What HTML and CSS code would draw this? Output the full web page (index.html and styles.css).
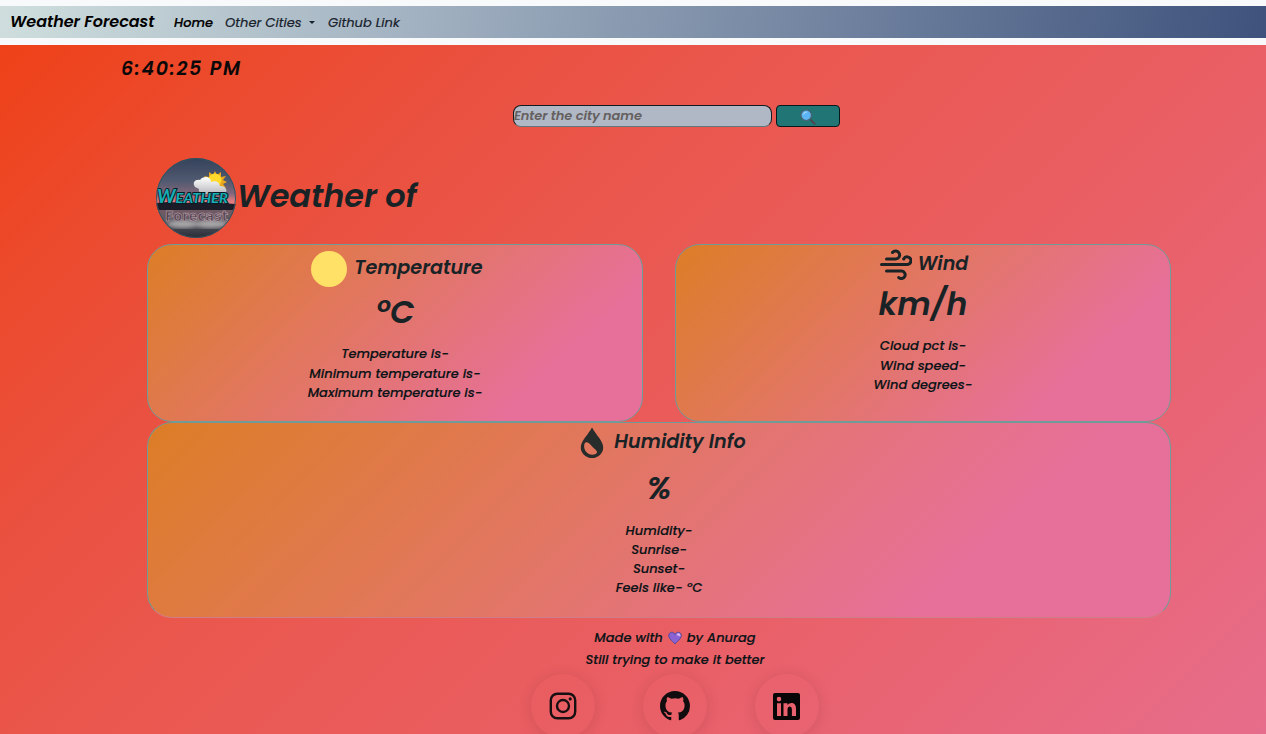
FILE: index.html
```
<!DOCTYPE html>
<html lang="en">
<head>
<meta charset="utf-8">
<title>Weather Forecast</title>
<link rel="stylesheet" href="styles.css">
</head>
<body>
<nav class="navbar">
  <div class="navbar-inner">
    <a class="brand"><span>Weather Forecast</span></a>
    <a class="nav-link active"><span>Home</span></a>
    <a class="nav-link cities"><span>Other Cities</span><i class="caret"></i></a>
    <a class="nav-link"><span>Github Link</span></a>
  </div>
</nav>
<main class="page">
  <div class="clock">6:40:25 PM</div>
  <form class="search">
    <input class="city" type="text" placeholder="Enter the city name">
    <button class="go" type="button" aria-label="Search">
      <svg width="16" height="16" viewBox="0 0 16 16"><path d="M10.5 10.5l4.6 4.8" stroke="#51404a" stroke-width="1.8"/><circle cx="6.2" cy="6.2" r="5.3" fill="#5db4f5" stroke="#49606c" stroke-width="1.2"/><path d="M3.2 5.4Q4.4 3 7 3" stroke="#a7d8fa" stroke-width="1.2" fill="none"/></svg>
    </button>
  </form>
  <header class="heading">
    <svg class="logo" viewBox="0 0 80 80">
      <defs>
        <linearGradient id="sky" x2="0" y2="1"><stop offset="0" stop-color="#34425b"/><stop offset=".5" stop-color="#515a70"/><stop offset=".75" stop-color="#80667a"/><stop offset=".92" stop-color="#e37c80"/></linearGradient>
        <linearGradient id="lake" x2="0" y2="1"><stop offset="0" stop-color="#765964"/><stop offset=".4" stop-color="#5f5a62"/><stop offset="1" stop-color="#262d38"/></linearGradient>
        <linearGradient id="cloudfill" x2="0" y2="1"><stop offset="0" stop-color="#fff"/><stop offset="1" stop-color="#b8b9bd"/></linearGradient>
        <clipPath id="disc"><circle cx="40" cy="40" r="40"/></clipPath>
        <filter id="soft"><feGaussianBlur stdDeviation="2"/></filter>
      </defs>
      <g clip-path="url(#disc)">
        <path fill="url(#sky)" d="M0 0h80v47H0z"/>
        <path fill="url(#lake)" d="M0 50h80v30H0z"/>
        <g filter="url(#soft)" fill="#aaa8aa"><ellipse cx="27" cy="66" rx="16" ry="4"/><ellipse cx="55" cy="66" rx="17" ry="4"/></g>
        <path fill="#1b1c27" d="M0 45l12-1 17 1 18-1 33 2v6H0z"/>
        <path fill="#eba81d" d="M59 13l2 4 4-3v5l5-1-3 4 4 2-4 2 3 4-5-1v5l-4-3-2 4-2-4-4 3v-5l-5 1 3-4-4-2 4-2-3-4 5 1v-5l4 3z"/>
        <circle cx="59" cy="22" r="6.5" fill="#ffda2c"/>
        <path fill="url(#cloudfill)" d="M39 29c-3-4 0-8 5-7 4-5 11-3 11 2 5-2 8 0 9 4 7 0 9 7 3 8H51c-6 0-9-2-8-5z"/>
        <text class="logo-top" x="1" y="45" textLength="71" lengthAdjust="spacingAndGlyphs"><tspan font-size="18">W</tspan>EATHER</text>
        <text class="logo-bottom" x="9" y="63" textLength="63" lengthAdjust="spacingAndGlyphs">Forecast</text>
      </g>
      <circle cx="40" cy="40" r="39.5" fill="none" stroke="#315360"/>
    </svg>
    <h1>Weather of</h1>
  </header>
  <section class="cards">
    <article class="card temp">
      <div class="title"><i class="sun"></i><h2>Temperature</h2></div>
      <h3>ºC</h3>
      <ul><li>Temperature is-</li><li>Minimum temperature is-</li><li>Maximum temperature is-</li></ul>
    </article>
    <article class="card wind">
      <div class="title">
        <svg width="32" height="32" viewBox="0 0 32 32" fill="none" stroke="#192326" stroke-width="3" stroke-linecap="round"><path d="M6.5 10h9a4 4 0 1 0-3-6.5M1.5 15.5H27a3.8 3.8 0 1 0-3.3-5.5M6.5 22h15.2a3.8 3.8 0 1 1-3 6.5"/></svg>
        <h2>Wind</h2>
      </div>
      <h3>km/h</h3>
      <ul><li>Cloud pct is-</li><li>Wind speed-</li><li>Wind degrees-</li></ul>
    </article>
    <article class="card humid">
      <div class="title">
        <svg width="24" height="32" viewBox="0 0 24 32"><path fill="#282c2b" fill-rule="evenodd" d="M12 .5C8 8 .8 14 .8 20.4a11.2 10.6 0 0 0 22.4 0C23.2 14 16 8 12 .5zM4.3 17.2c1.5-3.6 4.6-1.6 7.4 1.7 2.8 3.3 7.5 5.5 4.3 7.8-5.5 3.1-13.2-1.7-11.7-9.5z"/></svg>
        <h2>Humidity Info</h2>
      </div>
      <h3>%</h3>
      <ul><li>Humidity-</li><li>Sunrise-</li><li>Sunset-</li><li>Feels like- ºC</li></ul>
    </article>
  </section>
  <footer class="footer">
    <p class="made"><span>Made with</span><svg width="14" height="14" viewBox="0 0 14 14"><path fill="#8b62d3" stroke="#574a94" d="M7 12.8C3 9.2.6 7 .8 4 1.2.7 5.3.3 7 3.3 8.7.3 12.8.7 13.2 4 13.4 7 11 9.2 7 12.8z"/><path d="M9 3.8q2.5-1.4 2.6 1.4" stroke="#d9b6f5" stroke-width="2" fill="none"/></svg><span>by Anurag</span></p>
    <p class="better"><span>Still trying to make it better</span></p>
    <div class="social">
      <a><svg width="28" height="28" viewBox="0 0 28 28" fill="none" stroke="#170f12" stroke-width="2.4"><rect x="1.8" y="1.8" width="24.4" height="24.4" rx="6.5"/><circle cx="14" cy="14" r="6"/><circle cx="21.2" cy="6.9" r="1.6" fill="#170f12" stroke="none"/></svg></a>
      <a><svg width="30" height="30" viewBox="0 0 16 16" fill="#110d0f"><path d="M8 0C3.58 0 0 3.58 0 8c0 3.54 2.29 6.53 5.47 7.59.4.07.55-.17.55-.38 0-.19-.01-.82-.01-1.49-2.01.37-2.53-.49-2.69-.94-.09-.23-.48-.94-.82-1.13-.28-.15-.68-.52-.01-.53.63-.01 1.08.58 1.23.82.72 1.21 1.87.87 2.33.66.07-.52.28-.87.51-1.07-1.78-.2-3.64-.89-3.64-3.95 0-.87.31-1.59.82-2.15-.08-.2-.36-1.02.08-2.12 0 0 .67-.21 2.2.82a7.6 7.6 0 0 1 4 0c1.53-1.04 2.2-.82 2.2-.82.44 1.1.16 1.92.08 2.12.51.56.82 1.27.82 2.15 0 3.07-1.87 3.75-3.65 3.95.29.25.54.73.54 1.48 0 1.07-.01 1.93-.01 2.2 0 .21.15.46.55.38A8.01 8.01 0 0 0 16 8c0-4.42-3.58-8-8-8z"/></svg></a>
      <a><svg width="27" height="27" viewBox="0 0 27 27"><path fill="#080607" fill-rule="evenodd" d="M2 0h23a2 2 0 0 1 2 2v23a2 2 0 0 1-2 2H2a2 2 0 0 1-2-2V2a2 2 0 0 1 2-2zM4 10.2V23h4V10.2zM6 3.8a2.3 2.3 0 1 0 0 4.6 2.3 2.3 0 0 0 0-4.6zM10.5 10.2V23h4v-6.6c0-3.6 4.4-3.8 4.4 0V23H23v-7.8c0-6-6-6.5-8.5-3.1v-1.9z"/></svg></a>
    </div>
  </footer>
</main>
</body>
</html>
```
FILE: styles.css
```
* { box-sizing: border-box; }
body {
  margin: 0;
  height: 734px;
  overflow: hidden;
  display: flex;
  flex-direction: column;
  font-family: Poppins, Inter, sans-serif;
  font-style: italic;
  font-weight: 500;
  color: #0b1317;
}
h1, h2, h3, ul, p { margin: 0; padding: 0; }
h1, h2, h3 { font-weight: 600; color: #192326; white-space: nowrap; }
ul { list-style: none; }
svg { display: block; flex: none; }

.navbar { height: 45px; padding: 6px 0 7px; background: #f8f9fb; flex: none; }
.navbar-inner {
  height: 32px;
  display: flex;
  align-items: center;
  padding-left: 10px;
  background: linear-gradient(100deg, #cfdedd, #a0b0c0 34%, #3e527c);
  white-space: nowrap;
}
.brand { width: 164px; font-size: 16px; font-weight: 600; letter-spacing: -.03px; color: #000; line-height: 24px; padding-bottom: 1px; }
.nav-link { font-size: 13px; color: #17202b; margin-right: 13px; padding-top: 1px; }
.nav-link.active { width: 38px; color: #000; -webkit-text-stroke: .2px #000; }
.nav-link:not(.active) { font-weight: 400; -webkit-text-stroke: .2px #17202b; letter-spacing: .05px; }
.cities { width: 90px; display: flex; align-items: center; justify-content: space-between; }
.caret { border: 3px solid transparent; border-top-color: #17202b; border-bottom: 0; }

.page {
  flex: 1;
  min-height: 0;
  background: linear-gradient(135deg, #ee4118, #ec4a2c 12.5%, #ea503e 25%, #ea564b 37%, #ea5a56 49%, #e95f65 66%, #e8687e 88%, #e66d8b);
}
.clock { height: 60px; padding: 11px 0 0 121px; font-size: 19px; font-weight: 600; line-height: 25px; letter-spacing: 1.7px; color: #0b0809; }
.search { height: 22px; display: flex; gap: 4px; padding-left: 513px; }
.city {
  width: 259px; height: 22px; padding: 0;
  border: 1px solid #111c21; border-bottom-color: #63767d; border-radius: 8px;
  background: #b0b8c5; font: inherit; font-size: 13px; font-weight: 600; letter-spacing: -.08px;
}
.city::placeholder { color: #665f5f; opacity: 1; }
.go {
  width: 64px; height: 22px; padding: 2px 0 0; display: flex; align-items: center; justify-content: center;
  border: 1px solid #07191c; border-radius: 4px; background: #217574;
}
.heading { height: 117px; padding: 31px 0 0 156px; display: flex; gap: 1px; align-items: flex-start; }
.logo { width: 80px; height: 80px; }
.logo-top { font: italic bold 14px Lato, sans-serif; fill: #17aeb5; stroke: #071b25; stroke-width: 1.8px; paint-order: stroke; }
.logo-bottom { font: bold 14px "DejaVu Sans", sans-serif; fill: #584554; stroke: #c8b0b8; stroke-width: .5px; }
h1 { font-size: 32px; line-height: 40px; padding-top: 18px; letter-spacing: -.1px; }

.cards { display: grid; grid-template-columns: 496px 496px; grid-template-rows: 178px 196px; column-gap: 32px; margin-left: 147px; }
.card {
  display: flex; flex-direction: column; align-items: center;
  border: 1px solid #6f9b99; border-radius: 25px;
  background: linear-gradient(136deg, #dd7d26, #e67099 79%, #e67099);
}
.humid { grid-column: 1 / 3; border-bottom-color: #d17d88; }
.title { display: flex; align-items: center; gap: 7px; }
h2 { font-size: 19.2px; line-height: 24px; }
h3 { font-size: 32px; line-height: 40px; }
li { font-size: 13px; line-height: 19.4px; text-align: center; white-space: nowrap; -webkit-text-stroke: .15px #0b1317; }
.sun { width: 36px; height: 36px; border-radius: 50%; background: #ffe168; }
.temp .title { height: 36px; margin-top: 6px; padding-left: 4px; }
.temp .title h2 { margin-top: -2px; }
.temp h3 { margin: 5px 0 12.3px; }
.wind .title { height: 32px; margin-top: 4px; padding-left: 2px; gap: 6px; }
.wind .title h2 { margin-top: -3px; }
.wind h3 { margin: 3px 0 12.3px; }
.humid .title { height: 32px; margin-top: 4px; gap: 10px; padding-left: 8px; }
.humid .title h2 { margin-top: -3px; }
.humid h3 { margin: 9px 0 13px; }
.humid li { line-height: 19px; }

.footer { width: 290px; margin: 9px 0 0 530px; display: flex; flex-direction: column; align-items: center; font-size: 13px; line-height: 22px; white-space: nowrap; -webkit-text-stroke: .15px #0b1317; }
.made { display: flex; align-items: center; gap: 5px; }
.social { display: flex; gap: 48px; margin: 3px 1px 0 0; }
.social a { width: 64px; height: 64px; border-radius: 50%; display: flex; align-items: center; justify-content: center; box-shadow: 0 2px 14px rgba(90, 30, 40, .16); }
```
